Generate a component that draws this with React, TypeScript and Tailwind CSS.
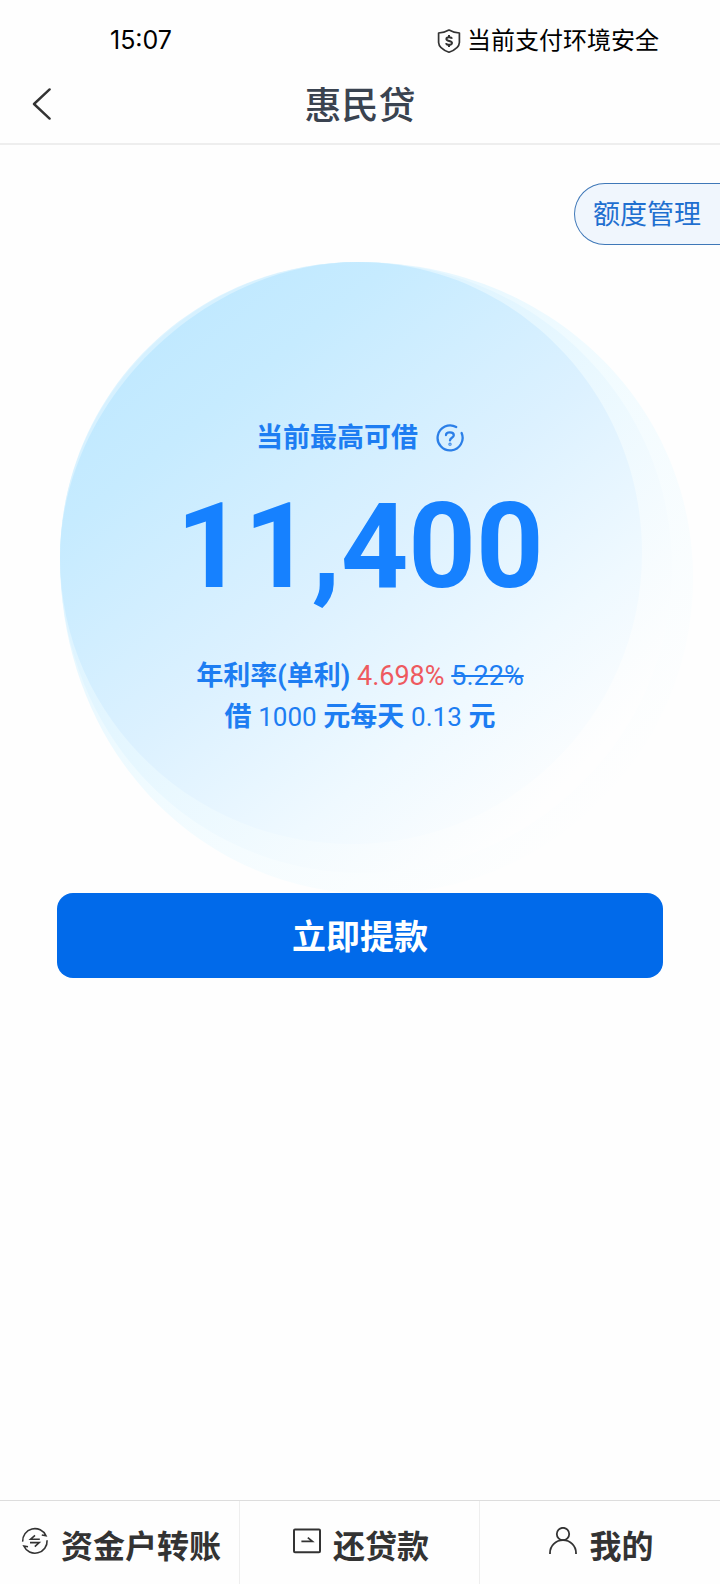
import type { ReactNode } from 'react'

interface NavItem {
  label: string
  icon: ReactNode
}

const navItems: NavItem[] = [
  { label: '资金户转账', icon: <TransferIcon /> },
  { label: '还贷款', icon: <RepayIcon /> },
  { label: '我的', icon: <UserIcon /> },
]

function ShieldIcon() {
  return (
    <svg className="h-6 w-6 shrink-0" viewBox="0 0 24 24" fill="none" stroke="#333" strokeWidth="1.7" aria-hidden="true">
      <path d="M12 1 Q16.5 3.6 22.4 4 V13.5 Q22.2 19.6 12 23.2 Q1.8 19.6 1.6 13.5 V4 Q7.5 3.6 12 1Z" strokeLinejoin="round" />
      <path d="M14.9 9.8 C14.4 7.8 9.4 7.6 9.4 10 C9.4 12.4 15 11.6 15 14 C15 16.5 9.4 16.3 9.1 14.1" strokeWidth="2" />
      <path d="M12 6 V8 M12 16 V18" strokeWidth="2" />
    </svg>
  )
}

function BackIcon() {
  return (
    <svg className="mb-1.5 h-8 w-5" viewBox="0 0 20 32" fill="none" stroke="#333" strokeWidth="2.4" aria-hidden="true">
      <path d="M17.6 1.4 L2 16 L17.6 30.6" strokeLinecap="round" strokeLinejoin="round" />
    </svg>
  )
}

function HelpIcon() {
  return (
    <svg className="h-7 w-7" viewBox="0 0 28 28" fill="none" stroke="#2b7fe8" strokeWidth="2.3" strokeLinecap="round" aria-hidden="true">
      <path d="M20.2 3 A12.5 12.5 0 1 0 25.6 9" />
      <path d="M10 11 C10.2 7.6 17.8 7.6 17.8 11.2 C17.8 13.8 14 13.8 14 16.4" />
      <circle cx="14" cy="20.2" r="0.5" />
    </svg>
  )
}

function TransferIcon() {
  return (
    <svg className="mb-3 h-7 w-7 shrink-0" viewBox="0 0 28 28" fill="none" stroke="#333" strokeWidth="1.6" aria-hidden="true">
      <path d="M1.7 14.6 A12.2 12.2 0 0 1 25 8.8 L20.8 8" />
      <path d="M26.1 13.2 A12.2 12.2 0 0 1 2.8 19 L7 19.8" />
      <path d="M14 8.4 L9.6 12.2 H18.8 M9 15.6 H18.2 L13.8 19.6" />
    </svg>
  )
}

function RepayIcon() {
  return (
    <svg className="mb-3 h-7 w-7 shrink-0" viewBox="0 0 28 28" fill="none" stroke="#333" strokeWidth="2" aria-hidden="true">
      <rect x="1" y="2.6" width="26" height="22.6" rx="1" />
      <path d="M8.4 14.4 H19.4 L14.8 10.6" strokeWidth="1.7" />
    </svg>
  )
}

function UserIcon() {
  return (
    <svg className="mb-3 h-7 w-7 shrink-0" viewBox="0 0 28 28" fill="none" stroke="#333" strokeWidth="1.8" aria-hidden="true">
      <circle cx="14" cy="7" r="6.2" />
      <path d="M1 27 V26 A13 12.8 0 0 1 27 26 V27" />
    </svg>
  )
}

function Bubble() {
  return (
    <svg className="absolute left-0 top-0 w-full" viewBox="0 0 720 640" fill="none" aria-hidden="true">
      <defs>
        <linearGradient id="bubble" x1="0.16" y1="0.14" x2="0.84" y2="0.98">
          <stop offset="0" stopColor="#c1e9ff" />
          <stop offset="0.14" stopColor="#c6ebff" />
          <stop offset="0.48" stopColor="#dcf1ff" />
          <stop offset="0.75" stopColor="#eff9ff" />
          <stop offset="1" stopColor="#fefefe" />
        </linearGradient>
        <linearGradient id="mid" x1="0.1" y1="0.1" x2="0.84" y2="0.84">
          <stop offset="0" stopColor="#d4f0ff" />
          <stop offset="0.5" stopColor="#e6f7ff" />
          <stop offset="1" stopColor="#fefefe" />
        </linearGradient>
        <linearGradient id="outer" x1="0.1" y1="0.1" x2="0.86" y2="0.86">
          <stop offset="0" stopColor="#dcf3ff" />
          <stop offset="0.5" stopColor="#f0fbff" />
          <stop offset="1" stopColor="#fefefe" />
        </linearGradient>
      </defs>
      <path
        d="M60 297 C60 133 194 1 358 1 C550 1 693 143 693 317 C693 492 550 633 376 633 C202 633 60 492 60 297Z"
        fill="url(#outer)"
      />
      <path
        d="M60 297 C60 135 196 1 358 1 C530 1 672 135 672 307 C672 476 532 612 364 612 C196 612 60 478 60 297Z"
        fill="url(#mid)"
      />
      <path
        d="M60 297 C60 141 204 1 358 1 C514 1 642 131 642 292 C642 453 512 583 351 583 C190 583 60 453 60 297Z"
        fill="url(#bubble)"
      />
    </svg>
  )
}

export default function App() {
  return (
    <div className="flex min-h-screen flex-col bg-[#fefefe] font-[Roboto,'Noto_Sans_CJK_SC',sans-serif] text-[#333]">
      <div className="flex h-20 items-center justify-between pl-[110px] pr-[61px] pt-0.5 font-[Inter,'Noto_Sans_CJK_SC',sans-serif] text-2xl text-black">
        <span className="text-[25px]">15:07</span>
        <span className="flex items-center gap-1.5">
          <ShieldIcon />
          当前支付环境安全
        </span>
      </div>

      <header className="grid h-[65px] grid-cols-[1fr_auto_1fr] items-center border-b-2 border-[#eee] px-8 pb-2.5">
        <button type="button" aria-label="返回" className="justify-self-start">
          <BackIcon />
        </button>
        <h1 className="text-[37px] font-medium leading-10 text-[#3a4350]">惠民贷</h1>
      </header>

      <main className="flex flex-1 flex-col">
        <button
          type="button"
          className="mt-[38px] h-[62px] self-end rounded-l-full border border-r-0 border-[#3f78b8] bg-[#f0f6fd] pl-[18px] pr-[19px] pt-0.5 text-[27px] leading-8 text-[#1f6fd0]"
        >
          额度管理
        </button>

        <section className="relative mt-4 flex flex-col items-center pt-[159px] text-[#1d7df2]">
          <Bubble />
          <div className="relative flex items-center gap-[18px] text-[27px] font-bold leading-9">
            当前最高可借
            <button type="button" aria-label="额度说明">
              <HelpIcon />
            </button>
          </div>
          <p className="relative mt-7 text-[118px] font-bold leading-[126px] text-[#1681ff]">11,400</p>
          <div className="relative mt-[46px] pb-[155px] text-center text-[27px] font-bold leading-[41px]">
            <p>
              年利率(单利) <span className="font-normal text-[#ee5a5f]">4.698%</span>{' '}
              <s className="font-normal">5.22%</s>
            </p>
            <p>
              借 <span className="text-[26px] font-normal">1000</span> 元每天{' '}
              <span className="text-[26px] font-normal">0.13</span> 元
            </p>
          </div>
        </section>

        <button
          type="button"
          className="relative mx-[57px] h-[85px] rounded-2xl bg-[#016aea] pt-1 text-[34px] font-bold text-white"
        >
          立即提款
        </button>
      </main>

      <nav className="grid h-[84px] grid-cols-3 border-t border-[#ddd]">
        {navItems.map(item => (
          <a
            key={item.label}
            href="#"
            className="flex items-center justify-center gap-3 border-r border-[#eee] pl-[3px] pt-2 text-[32px] font-bold last:border-r-0"
          >
            {item.icon}
            {item.label}
          </a>
        ))}
      </nav>
    </div>
  )
}
